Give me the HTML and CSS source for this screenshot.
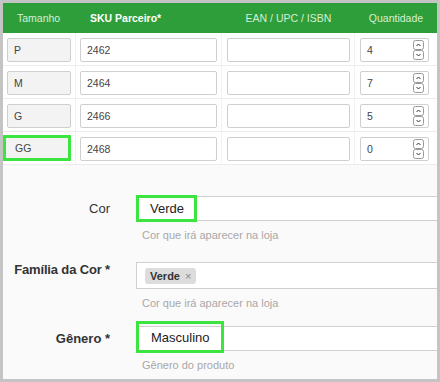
FILE: index.html
```html
<!DOCTYPE html>
<html lang="pt-BR">

<head>
    <meta charset="UTF-8">
    <meta name="viewport" content="width=device-width, initial-scale=1.0">
    <title>Variações</title>
    <link rel="stylesheet" href="styles.css">
</head>

<body>
    <div class="frame">
        <div class="grade">
            <div class="grade-head">
                <div class="th">Tamanho</div>
                <div class="th th-bold">SKU Parceiro*</div>
                <div class="th th-center">EAN / UPC / ISBN</div>
                <div class="th th-center">Quantidade</div>
            </div>

            <div class="grade-row">
                <div class="cell"><div class="inp inp-ro">P</div></div>
                <div class="cell"><div class="inp">2462</div></div>
                <div class="cell"><div class="inp"></div></div>
                <div class="cell cell-last">
                    <div class="inp inp-num">4
                        <svg class="spin" width="12" height="20" viewBox="0 0 12 20">
                            <rect x="0.5" y="0.5" width="10" height="9" rx="2" fill="#fff" stroke="#999"/>
                            <rect x="0.5" y="10.5" width="10" height="9" rx="2" fill="#fff" stroke="#999"/>
                            <path d="M3.5 6 L5.5 4 L7.5 6" fill="none" stroke="#333" stroke-width="1"/>
                            <path d="M3.5 14 L5.5 16 L7.5 14" fill="none" stroke="#333" stroke-width="1"/>
                        </svg>
                    </div>
                </div>
            </div>

            <div class="grade-row">
                <div class="cell"><div class="inp inp-ro">M</div></div>
                <div class="cell"><div class="inp">2464</div></div>
                <div class="cell"><div class="inp"></div></div>
                <div class="cell cell-last">
                    <div class="inp inp-num">7
                        <svg class="spin" width="12" height="20" viewBox="0 0 12 20">
                            <rect x="0.5" y="0.5" width="10" height="9" rx="2" fill="#fff" stroke="#999"/>
                            <rect x="0.5" y="10.5" width="10" height="9" rx="2" fill="#fff" stroke="#999"/>
                            <path d="M3.5 6 L5.5 4 L7.5 6" fill="none" stroke="#333" stroke-width="1"/>
                            <path d="M3.5 14 L5.5 16 L7.5 14" fill="none" stroke="#333" stroke-width="1"/>
                        </svg>
                    </div>
                </div>
            </div>

            <div class="grade-row">
                <div class="cell"><div class="inp inp-ro">G</div></div>
                <div class="cell"><div class="inp">2466</div></div>
                <div class="cell"><div class="inp"></div></div>
                <div class="cell cell-last">
                    <div class="inp inp-num">5
                        <svg class="spin" width="12" height="20" viewBox="0 0 12 20">
                            <rect x="0.5" y="0.5" width="10" height="9" rx="2" fill="#fff" stroke="#999"/>
                            <rect x="0.5" y="10.5" width="10" height="9" rx="2" fill="#fff" stroke="#999"/>
                            <path d="M3.5 6 L5.5 4 L7.5 6" fill="none" stroke="#333" stroke-width="1"/>
                            <path d="M3.5 14 L5.5 16 L7.5 14" fill="none" stroke="#333" stroke-width="1"/>
                        </svg>
                    </div>
                </div>
            </div>

            <div class="grade-row">
                <div class="cell cell-mark"><div class="inp inp-ro">GG</div></div>
                <div class="cell"><div class="inp">2468</div></div>
                <div class="cell"><div class="inp"></div></div>
                <div class="cell cell-last">
                    <div class="inp inp-num">0
                        <svg class="spin" width="12" height="20" viewBox="0 0 12 20">
                            <rect x="0.5" y="0.5" width="10" height="9" rx="2" fill="#fff" stroke="#999"/>
                            <rect x="0.5" y="10.5" width="10" height="9" rx="2" fill="#fff" stroke="#999"/>
                            <path d="M3.5 6 L5.5 4 L7.5 6" fill="none" stroke="#333" stroke-width="1"/>
                            <path d="M3.5 14 L5.5 16 L7.5 14" fill="none" stroke="#333" stroke-width="1"/>
                        </svg>
                    </div>
                </div>
            </div>
        </div>

        <div class="form">
            <div class="field">
                <label class="lbl">Cor</label>
                <div class="control">
                    <div class="box">
                        <span class="mark mark-cor">Verde</span>
                    </div>
                    <p class="help">Cor que irá aparecer na loja</p>
                </div>
            </div>

            <div class="field field-familia">
                <label class="lbl lbl-bold lbl-top">Família da Cor *</label>
                <div class="control">
                    <div class="box box-tags">
                        <span class="tag">Verde <span class="tag-x">×</span></span>
                    </div>
                    <p class="help">Cor que irá aparecer na loja</p>
                </div>
            </div>

            <div class="field field-genero">
                <label class="lbl lbl-bold">Gênero *</label>
                <div class="control">
                    <div class="box">
                        <span class="mark mark-genero">Masculino</span>
                    </div>
                    <p class="help">Gênero do produto</p>
                </div>
            </div>
        </div>
    </div>
</body>

</html>
```

FILE: styles.css
```css
* {
    margin: 0;
    padding: 0;
    box-sizing: border-box;
}

body {
    font-family: "Liberation Sans", Arial, sans-serif;
    background-color: #fff;
}

.frame {
    width: 440px;
    height: 382px;
    border: 3px solid #c4c4c4;
    background-color: #fafafa;
    overflow: hidden;
}

/* grade de variacoes */

.grade {
    background-color: #fff;
}

.grade-head {
    height: 30px;
    display: grid;
    grid-template-columns: 73px 146px 133px 1fr;
    align-items: center;
    background-color: #2e9e3a;
}

.th {
    font-size: 10.5px;
    color: #d6efd6;
    padding-left: 14px;
}

.th-bold {
    font-weight: 700;
    color: #fff;
}

.th-center {
    text-align: center;
    padding-left: 0;
}

.grade-row {
    display: grid;
    grid-template-columns: 73px 146px 133px 1fr;
    border-bottom: 1px solid #ececec;
}

.cell {
    padding: 5px 4px 3px 4px;
    border-right: 1px solid #f2f2f2;
}

.cell:nth-child(3) {
    padding-left: 5px;
}

.cell-last {
    padding: 5px 8px 3px 5px;
    border-right: none;
}

.cell-mark {
    padding-left: 0;
}

.cell-mark .inp {
    border: 3px solid #3be43e;
    border-radius: 0;
    height: 26px;
    margin-top: -2px;
    margin-right: 0;
    padding-left: 9px;
}

.inp {
    height: 24px;
    border: 1px solid #cfcfcf;
    border-radius: 2px;
    background-color: #fff;
    display: flex;
    align-items: center;
    padding-left: 6px;
    font-size: 10.5px;
    color: #444;
}

.inp-ro {
    background-color: #f3f3f3;
}

.inp-num {
    justify-content: space-between;
    padding-right: 3px;
}

.spin {
    display: block;
}

/* formulario */

.form {
    padding-top: 31px;
}

.field {
    display: flex;
    margin-bottom: 20px;
}

.field-familia {
    margin-bottom: 16px;
}

.field-genero {
    margin-bottom: 0;
}

.lbl {
    width: 107px;
    flex-shrink: 0;
    text-align: right;
    font-size: 13px;
    line-height: 25px;
    color: #333;
}

.lbl-bold {
    font-weight: 700;
}

.lbl-top {
    line-height: 16px;
    padding-top: 0;
    letter-spacing: -0.15px;
}

.control {
    margin-left: 26px;
    width: 340px;
}

.box {
    height: 25px;
    border: 1px solid #d0d0d0;
    border-right: none;
    background-color: #fff;
    display: flex;
    align-items: center;
}

.box-tags {
    height: 27px;
    padding-left: 8px;
}

.mark {
    border: 3px solid #3be43e;
    font-size: 13px;
    color: #222;
    display: flex;
    align-items: center;
    align-self: stretch;
}

.mark-cor {
    width: 61px;
    padding-left: 11px;
    margin: -2px 0 -2px -1px;
}

.mark-genero {
    width: 88px;
    padding-left: 12px;
    margin: -6px 0 -3px -1px;
}

.tag {
    background-color: #dcdcdc;
    border-radius: 3px;
    padding: 2px 5px;
    font-size: 11px;
    font-weight: 700;
    color: #333;
}

.tag-x {
    font-weight: 400;
    color: #888;
    margin-left: 2px;
}

.help {
    margin-top: 7px;
    padding-left: 6px;
    font-size: 11px;
    line-height: 14px;
    color: #a8a8a8;
}
```
